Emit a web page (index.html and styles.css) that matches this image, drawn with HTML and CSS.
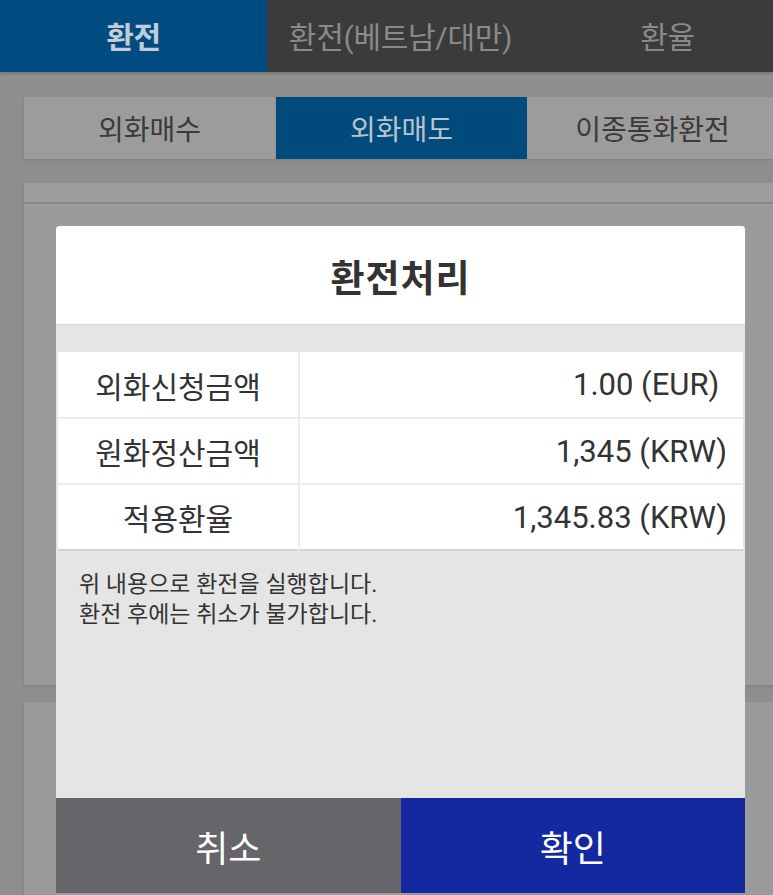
FILE: index.html
```html
<!DOCTYPE html>
<html lang="ko">
<head>
<meta charset="utf-8">
<title>환전</title>
<link rel="stylesheet" href="styles.css">
</head>
<body>
<div class="page">
  <nav class="topnav">
    <div class="tab active">환전</div>
    <div class="tab">환전(베트남/대만)</div>
    <div class="tab">환율</div>
  </nav>
  <main class="content">
    <div class="subtabs">
      <div class="subtab">외화매수</div>
      <div class="subtab active">외화매도</div>
      <div class="subtab">이종통화환전</div>
    </div>
    <section class="card card-main">
      <div class="card-head"></div>
      <div class="card-body"></div>
    </section>
    <section class="card card-next"></section>
  </main>
</div>

<div class="modal">
  <div class="modal-head">환전처리</div>
  <div class="modal-body">
    <table class="info">
      <tr><th>외화신청금액</th><td>1.00 (EUR)&nbsp;</td></tr>
      <tr><th>원화정산금액</th><td>1,345 (KRW)</td></tr>
      <tr><th>적용환율</th><td>1,345.83 (KRW)</td></tr>
    </table>
    <p class="notice">위 내용으로 환전을 실행합니다.<br>환전 후에는 취소가 불가합니다.</p>
  </div>
  <div class="modal-foot">
    <button class="btn btn-cancel">취소</button>
    <button class="btn btn-ok">확인</button>
  </div>
</div>
</body>
</html>
```

FILE: styles.css
```css
html, body {
  margin: 0;
  padding: 0;
  height: 100%;
  overflow: hidden;
}
body {
  background: #8e8e8e;
  font-family: Roboto, "Noto Sans CJK KR", "Noto Sans", sans-serif;
  position: relative;
}
.page {
  width: 773px;
  height: 895px;
  overflow: hidden;
}
.topnav {
  display: flex;
  height: 72px;
  background: #3b3b3b;
  box-shadow: 0 2px 2px rgba(0,0,0,0.15);
}
.topnav .tab {
  flex: 0 0 267px;
  display: flex;
  align-items: center;
  justify-content: center;
  font-size: 30px;
  color: #8a8a8a;
  letter-spacing: -0.3px;
  padding-bottom: 2px;
}
.topnav .tab.active {
  background: #004b80;
  color: #c3ccd6;
  font-weight: 700;
}
.content {
  padding: 25px 0 0 24px;
  width: 752px;
}
.subtabs {
  display: flex;
  height: 62px;
  background: #9c9c9c;
  box-shadow: 0 1px 2px rgba(0,0,0,0.12);
}
.subtab {
  flex: 0 0 251px;
  display: flex;
  align-items: center;
  justify-content: center;
  font-size: 28px;
  color: #3a3a3a;
  border-right: 1px solid #949494;
}
.subtab.active {
  background: #004b7c;
  color: #b9c3cd;
  border-right: none;
}
.card {
  background: #9b9b9b;
  box-shadow: 0 1px 2px rgba(0,0,0,0.12);
}
.card-main {
  margin-top: 24px;
  height: 502px;
  display: flex;
  flex-direction: column;
}
.card-head {
  height: 19px;
  background: #9d9d9d;
  border-bottom: 2px solid #888888;
}
.card-body {
  flex: 1;
}
.card-next {
  margin-top: 17px;
  height: 300px;
}

/* modal */
.modal {
  position: absolute;
  left: 56px;
  top: 226px;
  width: 689px;
  height: 667px;
  display: flex;
  flex-direction: column;
  background: #e5e5e5;
  border-radius: 4px 4px 0 0;
  overflow: hidden;
}
.modal-head {
  height: 96px;
  padding-top: 2px;
  background: #ffffff;
  border-bottom: 1px solid #d6d6d6;
  display: flex;
  align-items: center;
  justify-content: center;
  font-size: 37px;
  font-weight: 700;
  color: #333333;
  letter-spacing: 1px;
}
.modal-body {
  flex: 1;
  padding: 27px 2px 0;
}
.info {
  width: 100%;
  border-collapse: collapse;
  background: #ffffff;
  border-bottom: 2px solid #d4d4d4;
}
.info tr {
  height: 66px;
}
.info tr + tr {
  border-top: 2px solid #ececec;
}
.info th {
  width: 240px;
  font-weight: 400;
  font-size: 30px;
  color: #333333;
  border-right: 2px solid #ececec;
  text-align: center;
  padding: 0;
}
.info td {
  font-size: 31px;
  color: #333333;
  text-align: right;
  padding: 0 16px 0 0;
}
.notice {
  margin: 19px 0 0 21px;
  font-size: 23px;
  line-height: 30px;
  color: #333333;
}
.modal-foot {
  display: flex;
  height: 95px;
}
.btn {
  flex: 1;
  border: none;
  margin: 0;
  font-family: Roboto, "Noto Sans CJK KR", sans-serif;
  font-size: 36px;
  color: #ffffff;
}
.btn-cancel {
  background: #666569;
}
.btn-ok {
  background: #1428a0;
}
```
